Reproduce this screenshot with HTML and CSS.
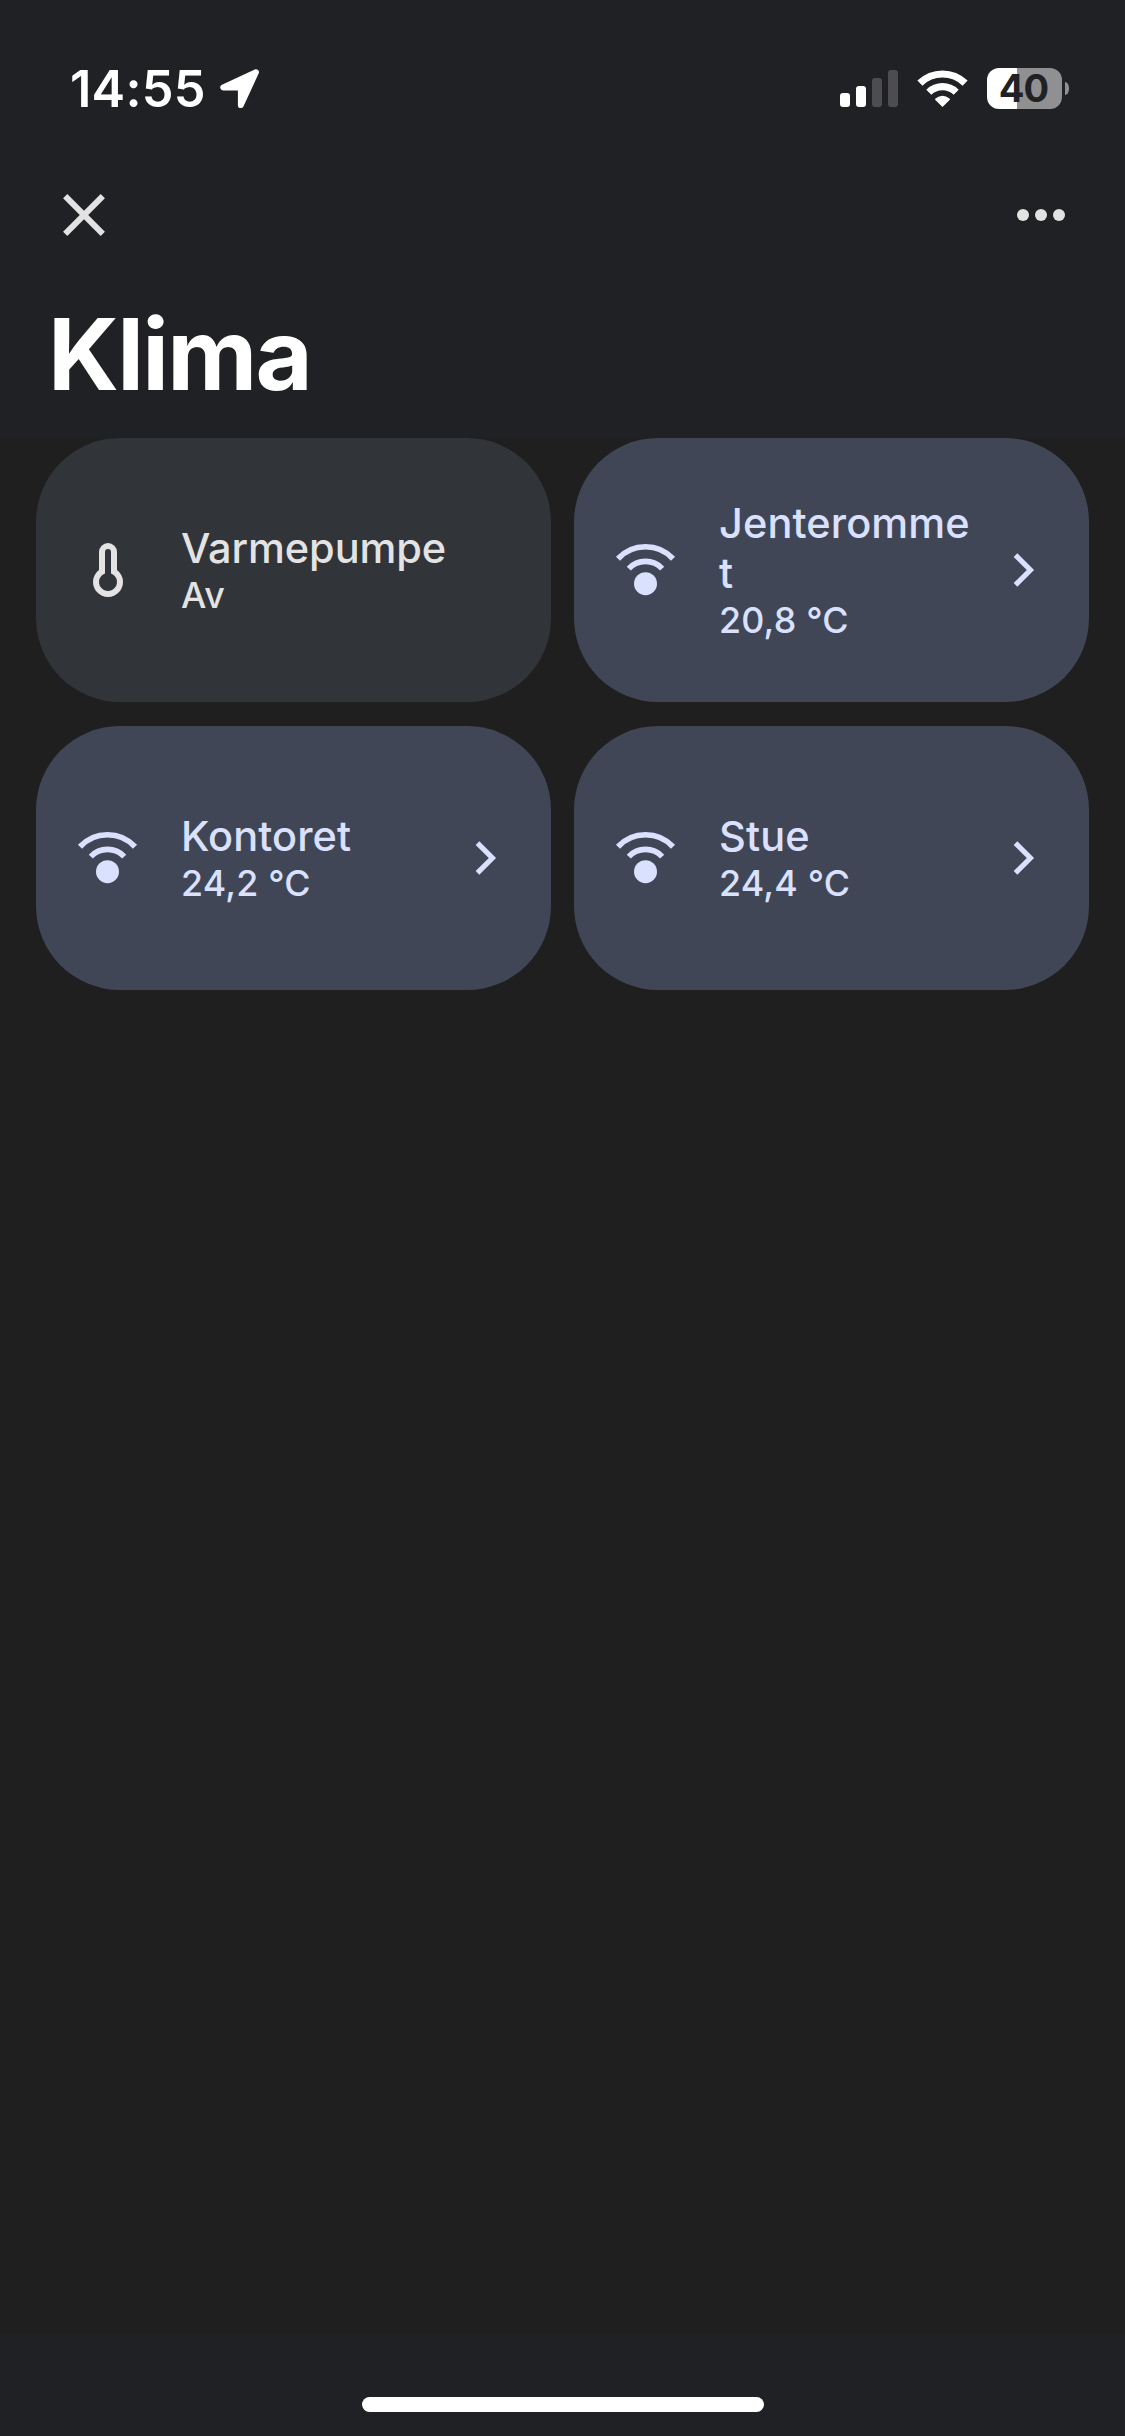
FILE: index.html
```html
<!DOCTYPE html>
<html lang="nb">
<head>
<meta charset="utf-8">
<title>Klima</title>
<link rel="stylesheet" href="styles.css">
</head>
<body>
<svg class="defs" width="0" height="0">
  <symbol id="sensor" viewBox="0 0 72 72">
    <circle cx="35.5" cy="49.7" r="11.5" fill="currentColor"/>
    <path d="M8 24.7A37.6 37.6 0 0 1 63 24.7M18.8 34.6A23 23 0 0 1 52.2 34.6" fill="none" stroke="currentColor" stroke-width="5.7"/>
  </symbol>
  <symbol id="chevron" viewBox="0 0 72 72">
    <path d="M34.5 21.1L49.4 36L34.5 50.9" fill="none" stroke="currentColor" stroke-width="5.2"/>
  </symbol>
</svg>
<div class="screen">
  <header class="top">
    <div class="status">
      <div class="clock">
        <span class="time">14:55</span>
        <svg class="location" width="40" height="40" viewBox="0 0 40 40"><path d="M36 3.2L3.2 18.5H20.8V36.2Z" fill="#fff" stroke="#fff" stroke-width="5.8" stroke-linejoin="round"/></svg>
      </div>
      <div class="indicators">
        <svg class="signal" width="58" height="38" viewBox="0 0 58 38">
          <rect x="0" y="23" width="10" height="14" rx="3" fill="#fff"/>
          <rect x="16" y="16" width="10" height="21" rx="3" fill="#fff"/>
          <rect x="32" y="8" width="10" height="29" rx="3" fill="#4d4d4f"/>
          <rect x="48" y="0" width="10" height="37" rx="3" fill="#4d4d4f"/>
        </svg>
        <svg class="wifi" width="51" height="38" viewBox="0 0 51 38">
          <g fill="none" stroke="#fff" stroke-width="7.2">
            <path d="M2.9 13.2A32.4 32.4 0 0 1 48.1 13.2"/>
            <path d="M11.8 22.3A19.6 19.6 0 0 1 39.2 22.3"/>
          </g>
          <path d="M25.5 37L18.4 30Q17.6 29.2 18.5 28.4Q25.5 23 32.5 28.4Q33.4 29.2 32.6 30Z" fill="#fff"/>
        </svg>
        <div class="battery">
          <div class="cell">40</div>
          <div class="nub"></div>
        </div>
      </div>
    </div>
    <nav class="toolbar">
      <svg width="42" height="42" viewBox="0 0 42 42"><path d="M2.2 2.2L39.8 39.8M39.8 2.2L2.2 39.8" stroke="#e2e2e2" stroke-width="6"/></svg>
      <svg width="48" height="12" viewBox="0 0 48 12" fill="#e2e2e2"><circle cx="6" cy="6" r="6"/><circle cx="24" cy="6" r="6"/><circle cx="42" cy="6" r="6"/></svg>
    </nav>
    <h1 class="title">Klima</h1>
  </header>
  <main class="grid">
    <article class="tile">
      <svg class="icon" viewBox="0 0 24 24"><path fill="currentColor" fill-rule="evenodd" d="M15 12V6a3 3 0 0 0-6 0v6a5 5 0 1 0 6 0zM11 13.17V6a1 1 0 0 1 2 0v7.17a3 3 0 1 1-2 0z"/></svg>
      <div class="label"><div class="name">Varmepumpe</div><div class="value">Av</div></div>
    </article>
    <article class="tile on">
      <svg class="icon"><use href="#sensor"/></svg>
      <div class="label"><div class="name">Jenterommet</div><div class="value">20,8 °C</div></div>
      <svg class="icon"><use href="#chevron"/></svg>
    </article>
    <article class="tile on">
      <svg class="icon"><use href="#sensor"/></svg>
      <div class="label"><div class="name">Kontoret</div><div class="value">24,2 °C</div></div>
      <svg class="icon"><use href="#chevron"/></svg>
    </article>
    <article class="tile on">
      <svg class="icon"><use href="#sensor"/></svg>
      <div class="label"><div class="name">Stue</div><div class="value">24,4 °C</div></div>
      <svg class="icon"><use href="#chevron"/></svg>
    </article>
  </main>
  <footer class="bottom"><div class="home"></div></footer>
</div>
</body>
</html>
```
FILE: styles.css
```css
* { box-sizing: border-box; }
body {
  margin: 0;
  background: #1f1f1f;
  color: #fff;
  font-family: Inter, "Liberation Sans", sans-serif;
}
svg { display: block; flex: none; }
.defs { position: absolute; }
.screen { display: flex; flex-direction: column; width: 1125px; height: 2436px; }
.top { height: 438px; background: #202125; }
.status {
  display: flex;
  justify-content: space-between;
  height: 140px;
  padding: 68px 56px 0 70px;
}
.clock { display: flex; }
.time { width: 150px; font-size: 50.5px; line-height: 42px; font-weight: 600; letter-spacing: 0.2px; white-space: nowrap; }
.location { margin-top: 1px; }
.indicators { display: flex; align-items: flex-start; }
.signal { margin-top: 2px; }
.wifi { margin: 2px 19px 0; }
.battery { display: flex; align-items: center; gap: 3px; }
.cell {
  width: 75px;
  height: 41px;
  padding-right: 2px;
  border-radius: 12px;
  background: linear-gradient(90deg, #fff 30px, #909092 30px);
  color: #202125;
  font-size: 38px;
  line-height: 41px;
  font-weight: 700;
  letter-spacing: -0.8px;
  text-align: center;
}
.nub { width: 4px; height: 13px; border-radius: 0 4px 4px 0 / 0 6px 6px 0; background: #909092; }
.toolbar {
  display: flex;
  justify-content: space-between;
  align-items: center;
  height: 150px;
  padding: 0 60px 0 63px;
}
.title { margin: -1px 0 0; padding-left: 48px; font-size: 98.6px; line-height: 130px; font-weight: 700; letter-spacing: -1.7px; }
.grid {
  flex: 1;
  display: grid;
  grid-template-columns: 515px 515px;
  grid-auto-rows: 264px;
  gap: 24px 23px;
  padding: 0 36px;
}
.tile {
  display: flex;
  align-items: center;
  padding: 0 36px;
  border-radius: 84px;
  background: #313439;
  color: #e3e3e3;
}
.on { background: #414656; color: #dae1ff; }
.icon { width: 72px; height: 72px; }
.label { flex: 1; min-width: 0; padding: 0 5px 0 37px; font-weight: 480; }
.tile:not(.on) .label { padding-right: 0; }
.tile:not(.on) .name { letter-spacing: -0.1px; }
.name { font-size: 41.5px; line-height: 50px; letter-spacing: 0.1px; overflow-wrap: anywhere; }
.value { padding-top: 1px; font-size: 35.8px; line-height: 43px; letter-spacing: 0.2px; }
.bottom { height: 102px; padding-top: 63px; background: #202125; }
.home { width: 402px; height: 15px; margin: 0 auto; border-radius: 8px; background: #fff; }
```
